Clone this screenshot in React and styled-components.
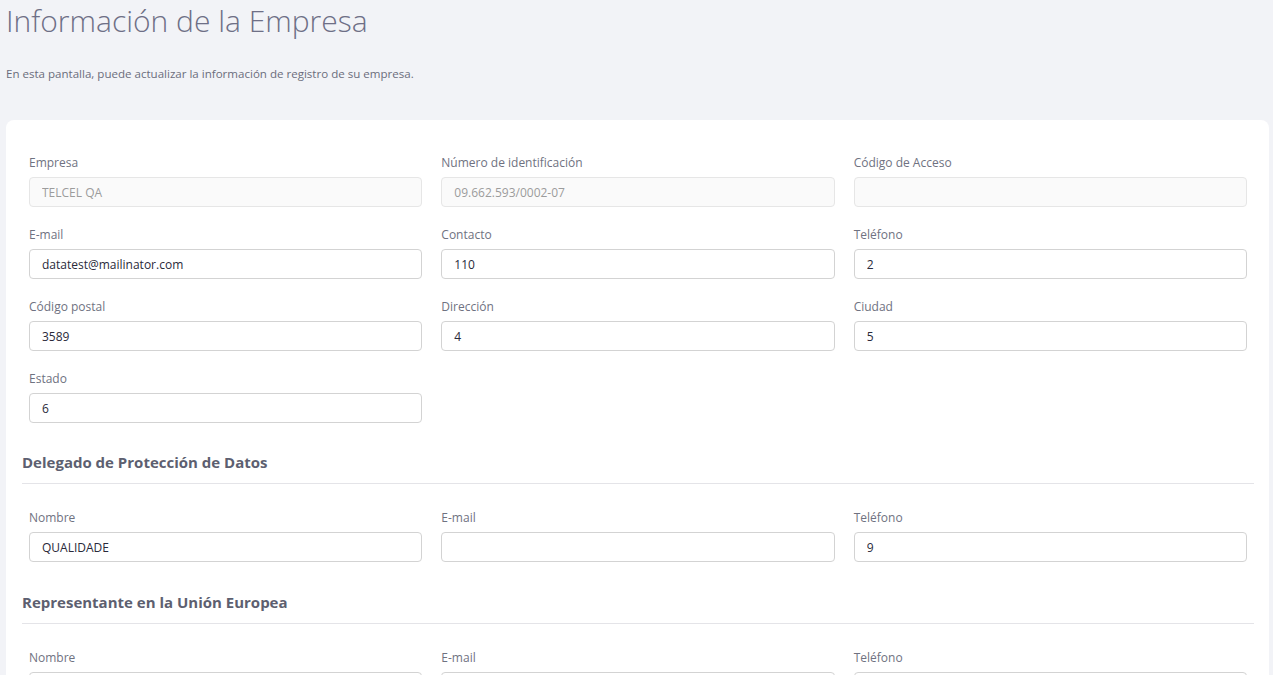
import React from "react";
import styled, { createGlobalStyle } from "styled-components";

const GlobalStyle = createGlobalStyle`
  html, body {
    margin: 0;
    padding: 0;
    background: #f2f3f7;
    font-family: "Open Sans", "Liberation Sans", sans-serif;
  }
  * { box-sizing: border-box; }
`;

const Page = styled.div`
  padding: 0 4px 0 6px;
  min-height: 675px;
  overflow: hidden;
`;

const Title = styled.h1`
  margin: 0;
  padding-top: 1px;
  font-size: 30px;
  font-weight: 300;
  line-height: 40px;
  color: #6e6f86;
`;

const Subtitle = styled.p`
  margin: 24px 0 0;
  font-size: 11.55px;
  line-height: 17px;
  color: #6b6d7c;
`;

const Card = styled.div`
  margin-top: 38px;
  background: #fff;
  border-radius: 8px;
  padding: 34px 15px 20px 16px;
`;

const FieldGrid = styled.div`
  display: grid;
  grid-template-columns: repeat(3, 1fr);
  column-gap: 19px;
  padding: 0 7px;
`;

const Field = styled.div`
  display: flex;
  flex-direction: column;
  margin-bottom: 19px;
`;

const Label = styled.label`
  font-size: 12px;
  line-height: 17px;
  color: #6f7281;
  margin-bottom: 6px;
`;

const Input = styled.input`
  height: 30px;
  width: 100%;
  padding: 0 12px;
  border: 1px solid ${(p) => (p.disabled ? "#e6e6e6" : "#d3d3d3")};
  border-radius: 4px;
  background: ${(p) => (p.disabled ? "#fafafa" : "#fff")};
  color: ${(p) => (p.disabled ? "#9c9c9c" : "#2a2a3a")};
  font-family: "Open Sans", "Liberation Sans", sans-serif;
  font-size: 12px;
  outline: none;
  &:disabled { -webkit-text-fill-color: #9c9c9c; opacity: 1; }
`;

const SectionTitle = styled.h3`
  margin: 10px 0 0;
  padding-bottom: 11px;
  border-bottom: 1px solid #e4e4e8;
  font-size: 15px;
  font-weight: 700;
  line-height: 20px;
  color: #5d5f70;
  & + ${FieldGrid} { margin-top: 25px; }
  & ~ & { margin-top: 11px; }
`;

const company = [
  { label: "Empresa", value: "TELCEL QA", disabled: true },
  { label: "Número de identificación", value: "09.662.593/0002-07", disabled: true },
  { label: "Código de Acceso", value: "", disabled: true },
  { label: "E-mail", value: "datatest@mailinator.com" },
  { label: "Contacto", value: "110" },
  { label: "Teléfono", value: "2" },
  { label: "Código postal", value: "3589" },
  { label: "Dirección", value: "4" },
  { label: "Ciudad", value: "5" },
  { label: "Estado", value: "6" },
];

const dpo = [
  { label: "Nombre", value: "QUALIDADE" },
  { label: "E-mail", value: "" },
  { label: "Teléfono", value: "9" },
];

const euRep = [
  { label: "Nombre", value: "" },
  { label: "E-mail", value: "" },
  { label: "Teléfono", value: "" },
];

function Fields({ items }) {
  return (
    <FieldGrid>
      {items.map((f, i) => (
        <Field key={i}>
          <Label>{f.label}</Label>
          <Input defaultValue={f.value} disabled={f.disabled} />
        </Field>
      ))}
    </FieldGrid>
  );
}

export default function App() {
  return (
    <>
      <GlobalStyle />
      <Page>
        <Title>Información de la Empresa</Title>
        <Subtitle>En esta pantalla, puede actualizar la información de registro de su empresa.</Subtitle>
        <Card>
          <Fields items={company} />
          <SectionTitle>Delegado de Protección de Datos</SectionTitle>
          <Fields items={dpo} />
          <SectionTitle>Representante en la Unión Europea</SectionTitle>
          <Fields items={euRep} />
        </Card>
      </Page>
    </>
  );
}
